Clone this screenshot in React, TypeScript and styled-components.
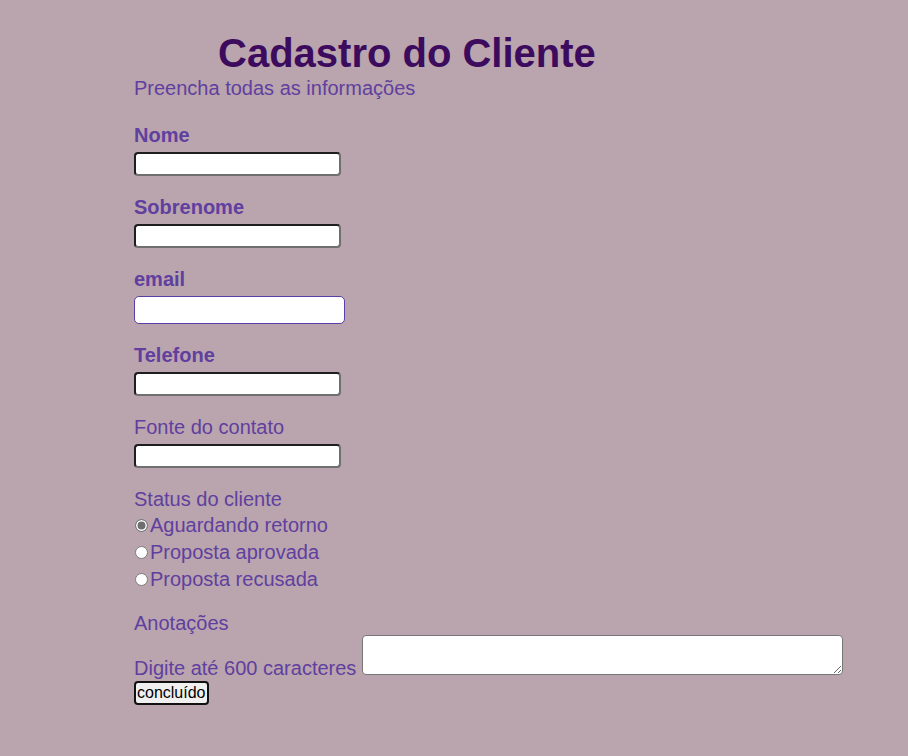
import React, { useState } from 'react';
import styled, { createGlobalStyle } from 'styled-components';

const GlobalStyle = createGlobalStyle`
  html, body {
    margin: 0;
    padding: 0;
    background-color: #baa4ad;
    font-family: "Liberation Sans", Arial, sans-serif;
  }
`;

const Page = styled.main`
  min-height: 756px;
  box-sizing: border-box;
  padding: 30px 0 0 134px;
`;

const Title = styled.h1`
  margin: 0 0 0 84px;
  font-size: 40px;
  line-height: 46px;
  font-weight: 700;
  color: #3c0b5e;
`;

const Subtitle = styled.p`
  margin: 1px 0 0;
  font-size: 20px;
  line-height: 23px;
  color: #5f3f9f;
`;

const Form = styled.form`
  display: flex;
  flex-direction: column;
  align-items: flex-start;
  gap: 20px;
  margin-top: 24px;
`;

const Field = styled.div`
  display: flex;
  flex-direction: column;
  align-items: flex-start;
  gap: 5px;
`;

const Label = styled.label<{ $bold?: boolean }>`
  display: block;
  font-size: 20px;
  line-height: 23px;
  font-weight: ${(p) => (p.$bold ? 700 : 400)};
  color: #5f3f9f;
`;

const TextInput = styled.input`
  box-sizing: border-box;
  width: 207px;
  height: 24px;
  margin: 0;
  padding: 1px 4px;
  border: 2px solid;
  border-color: #1e1e1e #6f6f6f #6f6f6f #1e1e1e;
  border-radius: 4px;
  background: #fff;
  font-family: "Liberation Sans", Arial, sans-serif;
  font-size: 14px;
  outline: none;
`;

const EmailInput = styled(TextInput)`
  width: 211px;
  height: 28px;
  border: 1px solid #5b3fa6;
  border-radius: 5px;
`;

const RadioGroup = styled.div`
  display: flex;
  flex-direction: column;
  align-items: flex-start;
  margin: -4px 0 -1px;
`;

const RadioRow = styled.label`
  display: flex;
  align-items: center;
  height: 27px;
  font-size: 20px;
  color: #5f3f9f;
  cursor: pointer;
`;

const Radio = styled.input`
  appearance: none;
  box-sizing: border-box;
  width: 13px;
  height: 13px;
  margin: -1px 2px 0 1px;
  border: 1px solid #7c7c7c;
  border-radius: 50%;
  background: #fff;
  cursor: pointer;

  &:checked {
    background: #6f6f6f;
    box-shadow: inset 0 0 0 1.5px #fff;
  }
`;

const NotesRow = styled.div`
  display: flex;
  align-items: flex-end;
  gap: 6px;
  margin-top: -20px;
`;

const Hint = styled.span`
  font-size: 20px;
  line-height: 20px;
  margin-bottom: -3px;
  color: #5f3f9f;
`;

const Notes = styled.textarea`
  box-sizing: border-box;
  width: 481px;
  height: 40px;
  margin: 0;
  border: 1px solid #767676;
  border-radius: 4px;
  background: #fff;
  font-family: "Liberation Sans", Arial, sans-serif;
  font-size: 14px;
  outline: none;
`;

const SubmitButton = styled.button`
  box-sizing: border-box;
  height: 24px;
  margin-top: -14px;
  padding: 0 1px;
  border: 2px solid #111;
  border-radius: 4px;
  background: #f0f0f0;
  color: #000;
  font-family: "Liberation Sans", Arial, sans-serif;
  font-size: 16px;
  line-height: 18px;
  cursor: pointer;
`;

const statusOptions = ['Aguardando retorno', 'Proposta aprovada', 'Proposta recusada'];

export default function App() {
  const [status, setStatus] = useState(statusOptions[0]);

  return (
    <>
      <GlobalStyle />
      <Page>
        <Title>Cadastro do Cliente</Title>
        <Subtitle>Preencha todas as informações</Subtitle>
        <Form onSubmit={(e) => e.preventDefault()}>
          <Field>
            <Label $bold htmlFor="nome">Nome</Label>
            <TextInput id="nome" type="text" />
          </Field>
          <Field>
            <Label $bold htmlFor="sobrenome">Sobrenome</Label>
            <TextInput id="sobrenome" type="text" />
          </Field>
          <Field>
            <Label $bold htmlFor="email">email</Label>
            <EmailInput id="email" type="email" />
          </Field>
          <Field>
            <Label $bold htmlFor="telefone">Telefone</Label>
            <TextInput id="telefone" type="tel" />
          </Field>
          <Field>
            <Label htmlFor="fonte">Fonte do contato</Label>
            <TextInput id="fonte" type="text" />
          </Field>
          <Field>
            <Label as="span">Status do cliente</Label>
            <RadioGroup>
              {statusOptions.map((opt) => (
                <RadioRow key={opt}>
                  <Radio
                    type="radio"
                    name="status"
                    checked={status === opt}
                    onChange={() => setStatus(opt)}
                  />
                  {opt}
                </RadioRow>
              ))}
            </RadioGroup>
          </Field>
          <Label htmlFor="notas">Anotações</Label>
          <NotesRow>
            <Hint>Digite até 600 caracteres</Hint>
            <Notes id="notas" maxLength={600} />
          </NotesRow>
          <SubmitButton type="submit">concluído</SubmitButton>
        </Form>
      </Page>
    </>
  );
}
